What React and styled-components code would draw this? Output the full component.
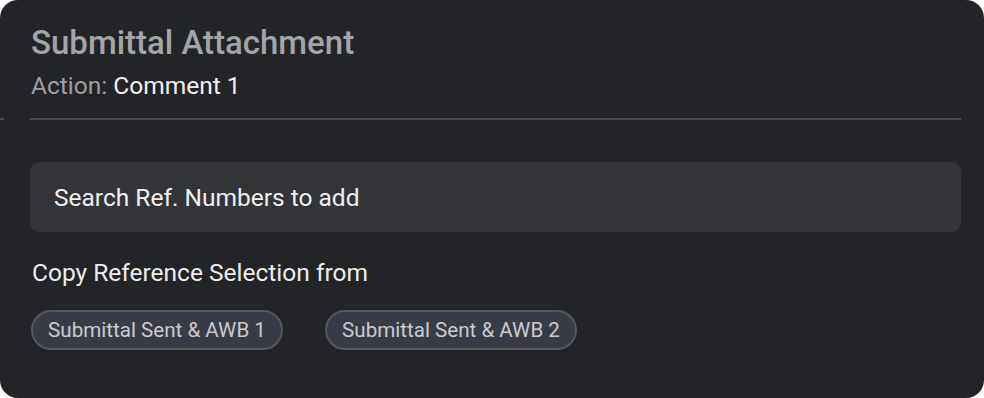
import React from "react";
import styled, { createGlobalStyle } from "styled-components";

const Global = createGlobalStyle`
  html, body { margin: 0; padding: 0; background: #ffffff; }
  body { font-family: Roboto, "Noto Sans", "Liberation Sans", sans-serif; }
  * { box-sizing: border-box; }
`;

const Card = styled.div`
  width: 984px;
  height: 398px;
  background: #232428;
  border-radius: 18px;
  padding: 23px 23px 0 30px;
  display: flex;
  flex-direction: column;
  overflow: hidden;
`;

const Header = styled.div`
  display: flex;
  flex-direction: column;
  padding-left: 1px;
`;

const Title = styled.h1`
  margin: 0;
  font-size: 33px;
  line-height: 40px;
  font-weight: 500;
  color: #a3a4a8;
`;

const Subtitle = styled.div`
  margin-top: 8px;
  font-size: 24.5px;
  line-height: 30px;
  color: #9d9ea2;
`;

const Value = styled.span`
  color: #f4eeee;
`;

const Divider = styled.div`
  position: relative;
  margin-top: 17px;
  height: 2px;
  background: #4a4b50;
  &::before {
    content: "";
    position: absolute;
    left: -30px;
    top: 0;
    width: 4px;
    height: 2px;
    background: #4a4b50;
  }
`;

const SearchBox = styled.div`
  margin-top: 42px;
  height: 70px;
  border-radius: 9px;
  background: #333438;
  display: flex;
  align-items: center;
  padding-left: 24px;
  font-size: 24.5px;
  color: #efefef;
`;

const Label = styled.div`
  margin-top: 26px;
  padding-left: 2px;
  font-size: 24.5px;
  line-height: 30px;
  color: #ececec;
`;

const Chips = styled.div`
  margin-top: 22px;
  display: flex;
  gap: 42px;
  padding-left: 1px;
`;

const Chip = styled.button`
  height: 40px;
  width: 252px;
  border-radius: 20px;
  border: 2px solid #55575d;
  background: #393c47;
  color: #c9cacd;
  font-family: inherit;
  font-size: 20.6px;
  display: flex;
  align-items: center;
  justify-content: center;
  padding: 0 10px;
`;

export default function App() {
  return (
    <>
      <Global />
      <Card>
        <Header>
          <Title>Submittal Attachment</Title>
          <Subtitle>
            Action: <Value>Comment 1</Value>
          </Subtitle>
        </Header>
        <Divider />
        <SearchBox>Search Ref. Numbers to add</SearchBox>
        <Label>Copy Reference Selection from</Label>
        <Chips>
          <Chip>Submittal Sent &amp; AWB 1</Chip>
          <Chip>Submittal Sent &amp; AWB 2</Chip>
        </Chips>
      </Card>
    </>
  );
}
